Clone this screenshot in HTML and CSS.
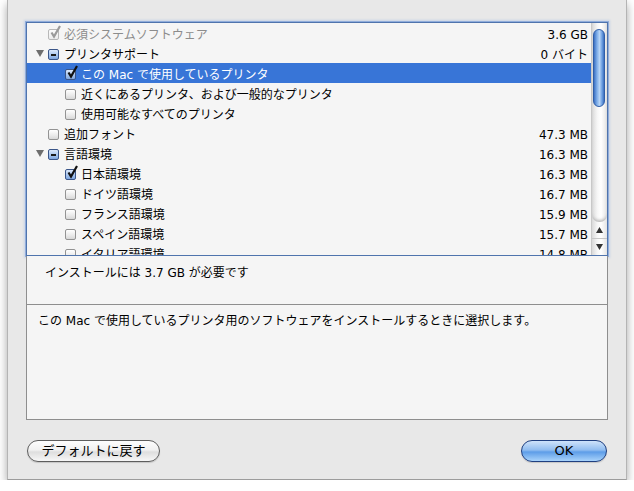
FILE: index.html
```html
<!DOCTYPE html>
<html lang="ja">
<head>
<meta charset="utf-8">
<title>カスタマイズ</title>
<link rel="stylesheet" href="styles.css">
</head>
<body>
<div class="window">
  <div class="listbox">
    <div class="rows">
      <div class="row disabled">
        <span class="disc l0"></span>
        <span class="cb checked"><svg class="tick" viewBox="0 0 13 14" width="13" height="14"><path d="M2.5 7.5 L5 11.5 L11 1" fill="none" stroke="#9a9a9a" stroke-width="2.2"/></svg></span>
        <span class="label">必須システムソフトウェア</span>
        <span class="size">3.6 GB</span>
      </div>
      <div class="row">
        <span class="disc l0"><svg class="tri" viewBox="0 0 8 7" width="8" height="7"><polygon points="0,0 8,0 4,7" fill="#6e6e6e"/></svg></span>
        <span class="cb mixed"><span class="dash"></span></span>
        <span class="label">プリンタサポート</span>
        <span class="size">0 バイト</span>
      </div>
      <div class="row selected">
        <span class="disc l1"></span>
        <span class="cb checked on"><svg class="tick" viewBox="0 0 13 14" width="13" height="14"><path d="M2.5 7.5 L5 11.5 L11 1" fill="none" stroke="#111" stroke-width="2.2"/></svg></span>
        <span class="label">この Mac で使用しているプリンタ</span>
        <span class="size"></span>
      </div>
      <div class="row">
        <span class="disc l1"></span>
        <span class="cb"></span>
        <span class="label">近くにあるプリンタ、および一般的なプリンタ</span>
        <span class="size"></span>
      </div>
      <div class="row">
        <span class="disc l1"></span>
        <span class="cb"></span>
        <span class="label">使用可能なすべてのプリンタ</span>
        <span class="size"></span>
      </div>
      <div class="row">
        <span class="disc l0"></span>
        <span class="cb"></span>
        <span class="label">追加フォント</span>
        <span class="size">47.3 MB</span>
      </div>
      <div class="row">
        <span class="disc l0"><svg class="tri" viewBox="0 0 8 7" width="8" height="7"><polygon points="0,0 8,0 4,7" fill="#6e6e6e"/></svg></span>
        <span class="cb mixed"><span class="dash"></span></span>
        <span class="label">言語環境</span>
        <span class="size">16.3 MB</span>
      </div>
      <div class="row">
        <span class="disc l1"></span>
        <span class="cb checked on"><svg class="tick" viewBox="0 0 13 14" width="13" height="14"><path d="M2.5 7.5 L5 11.5 L11 1" fill="none" stroke="#111" stroke-width="2.2"/></svg></span>
        <span class="label">日本語環境</span>
        <span class="size">16.3 MB</span>
      </div>
      <div class="row">
        <span class="disc l1"></span>
        <span class="cb"></span>
        <span class="label">ドイツ語環境</span>
        <span class="size">16.7 MB</span>
      </div>
      <div class="row">
        <span class="disc l1"></span>
        <span class="cb"></span>
        <span class="label">フランス語環境</span>
        <span class="size">15.9 MB</span>
      </div>
      <div class="row">
        <span class="disc l1"></span>
        <span class="cb"></span>
        <span class="label">スペイン語環境</span>
        <span class="size">15.7 MB</span>
      </div>
      <div class="row">
        <span class="disc l1"></span>
        <span class="cb"></span>
        <span class="label">イタリア語環境</span>
        <span class="size">14.8 MB</span>
      </div>
    </div>
    <div class="scrollbar">
      <div class="track"><div class="thumb"></div></div>
      <div class="arrow up"><svg viewBox="0 0 7 6" width="7" height="6"><polygon points="3.5,0 7,6 0,6" fill="#333"/></svg></div>
      <div class="arrow down"><svg viewBox="0 0 7 6" width="7" height="6"><polygon points="0,0 7,0 3.5,6" fill="#333"/></svg></div>
    </div>
  </div>
  <div class="info">
    <div class="status">インストールには 3.7 GB が必要です</div>
    <div class="desc">この Mac で使用しているプリンタ用のソフトウェアをインストールするときに選択します。</div>
  </div>
  <div class="buttons">
    <button class="btn">デフォルトに戻す</button>
    <button class="btn primary">OK</button>
  </div>
</div>
</body>
</html>
```

FILE: styles.css
```css
html, body {
  margin: 0;
  padding: 0;
  background: #ffffff;
}
body {
  font-family: "DejaVu Sans", "Noto Sans CJK JP", sans-serif;
  font-size: 12px;
  color: #000;
}
.window {
  margin-left: 7px;
  width: 620px;
  height: 480px;
  box-sizing: border-box;
  padding: 22px 19px 0 19px;
  background: #e8e8e8;
  border-left: 1px solid #b4b4b4;
  border-right: 1px solid #b4b4b4;
  border-bottom: 1px solid #9c9c9c;
  box-shadow: 0 4px 9px rgba(0,0,0,0.35);
  display: flex;
  flex-direction: column;
}
.listbox {
  height: 234px;
  box-sizing: border-box;
  border: 1px solid #4f74ad;
  box-shadow: 0 0 0 1px rgba(125,160,215,0.75), 0 0 2px 2px rgba(140,175,225,0.35);
  background: #f5f5f5;
  display: flex;
  overflow: hidden;
  margin-left: -1px;
  margin-right: -1px;
}
.rows {
  flex: 1;
  overflow: hidden;
}
.row {
  height: 20px;
  display: flex;
  align-items: center;
  white-space: nowrap;
}
.row.selected {
  background: #3875d7;
  color: #fff;
}
.row.disabled .label {
  color: #8c8c8c;
}
.disc {
  flex: none;
  height: 20px;
  display: flex;
  align-items: center;
}
.disc.l0 { width: 21px; }
.disc.l1 { width: 38px; }
.tri {
  margin-left: 9px;
}
.cb {
  flex: none;
  position: relative;
  width: 11px;
  height: 11px;
  box-sizing: border-box;
  border: 1px solid #939393;
  border-radius: 2px;
  background: linear-gradient(#ffffff, #eaeaea 60%, #d8d8d8);
  margin-right: 5px;
  margin-top: 2px;
}
.row.disabled .cb {
  border-color: #b8b8b8;
  background: linear-gradient(#fbfbfb, #ececec);
}
.cb.on, .cb.mixed {
  border-color: #3a5588;
  background: linear-gradient(#dbe8fb, #a9c6ef 55%, #7fa7e0);
}
.tick {
  position: absolute;
  left: 0;
  top: -5px;
}
.dash {
  position: absolute;
  left: 2px;
  top: 4px;
  width: 5px;
  height: 2px;
  background: #1a1a1a;
}
.label {
  flex: 1;
  padding-top: 4px;
  line-height: 16px;
}
.size {
  flex: none;
  padding-right: 3px;
  padding-top: 4px;
  line-height: 16px;
}
.scrollbar {
  flex: none;
  width: 15px;
  display: flex;
  flex-direction: column;
  background: linear-gradient(90deg, #d9d9d9, #f6f6f6 35%, #ffffff 60%, #e4e4e4);
  border-left: 1px solid #c8c8c8;
}
.track {
  flex: 1;
  padding: 6px 0 0 1px;
  border-bottom-left-radius: 7px;
  border-bottom-right-radius: 7px;
  box-shadow: inset 0 -3px 3px -1px #bdbdbd;
}
.thumb {
  width: 12px;
  height: 78px;
  box-sizing: border-box;
  border: 1px solid #2f5ea8;
  border-radius: 7px;
  background: linear-gradient(90deg, #3c71c4, #7faee9 30%, #b6d4f6 55%, #6c9fe2 80%, #3c6fbf);
}
.arrow {
  height: 16px;
  display: flex;
  align-items: center;
  justify-content: center;
}
.arrow.up {
  border-bottom: 1px solid #c6c6c6;
}
.info {
  height: 164px;
  box-sizing: border-box;
  background: #f5f5f5;
  border-left: 1px solid #8e8e8e;
  border-right: 1px solid #8e8e8e;
  border-bottom: 1px solid #8e8e8e;
  margin-left: -1px;
  margin-right: -1px;
  display: flex;
  flex-direction: column;
}
.status {
  height: 49px;
  box-sizing: border-box;
  border-bottom: 1px solid #8e8e8e;
  padding: 9px 0 0 18px;
  line-height: 16px;
}
.desc {
  padding: 8px 0 0 11px;
  line-height: 16px;
}
.buttons {
  margin-top: 20px;
  display: flex;
  justify-content: space-between;
}
.btn {
  font-family: "DejaVu Sans", "Noto Sans CJK JP", sans-serif;
  font-size: 13px;
  height: 22px;
  padding: 0;
  line-height: 20px;
  border: 1px solid #5e5e5e;
  border-radius: 11px;
  background: linear-gradient(#fdfdfd, #f1f1f1 45%, #dedede 55%, #f7f7f7);
  color: #000;
  width: 133px;
  box-shadow: 0 1px 1px rgba(0,0,0,0.15);
}
.btn.primary {
  width: 86px;
  border-color: #1f3f80;
  background: linear-gradient(#cfe3fa, #91bdf0 45%, #5d9de8 55%, #a9d3fb);
}
```
